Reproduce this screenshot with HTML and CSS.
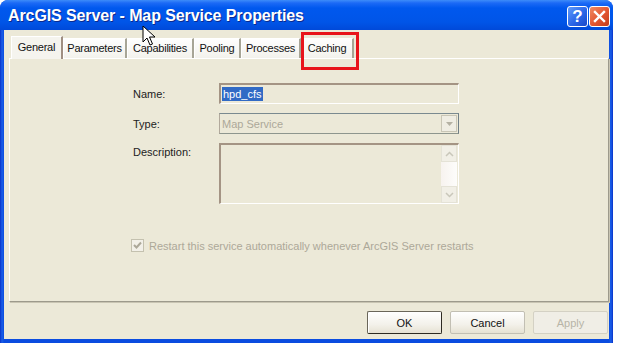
FILE: index.html
```html
<!DOCTYPE html>
<html>
<head>
<meta charset="utf-8">
<link rel="stylesheet" href="styles.css">
</head>
<body>
<div class="window">
  <div class="titlebar">
    <span class="title">ArcGIS Server - Map Service Properties</span>
    <div class="caption-btns">
      <span class="cbtn help">?</span>
      <span class="cbtn close"><svg width="13" height="13" viewBox="0 0 13 13"><path d="M2 2 L11 11 M11 2 L2 11" stroke="#fff" stroke-width="2.4" stroke-linecap="square"/></svg></span>
    </div>
  </div>
  <div class="client">
    <div class="tabs">
      <span class="tab selected t-general">General</span>
      <span class="tab t-params">Parameters</span>
      <span class="tab t-caps">Capabilities</span>
      <span class="tab t-pool">Pooling</span>
      <span class="tab t-proc">Processes</span>
      <span class="tab t-cache">Caching</span>
    </div>
    <div class="panel">
      <div class="form">
        <label class="lbl">Name:</label>
        <div class="field text"><span class="sel">hpd_cfs</span></div>
        <label class="lbl">Type:</label>
        <div class="field select"><span class="grey">Map Service</span><span class="dd"><svg width="7" height="4" viewBox="0 0 7 4"><path d="M0 0 H7 L3.5 4 Z" fill="#B4B1A3"/></svg></span></div>
        <label class="lbl top">Description:</label>
        <div class="field area"><div class="vscroll"><span class="sbtn"><svg width="9" height="6" viewBox="0 0 9 6"><path d="M1 5 L4.5 1.5 L8 5" stroke="#C9C7BA" stroke-width="1.5" fill="none"/></svg></span><span class="strack"></span><span class="sbtn"><svg width="9" height="6" viewBox="0 0 9 6"><path d="M1 1 L4.5 4.5 L8 1" stroke="#C9C7BA" stroke-width="1.5" fill="none"/></svg></span></div></div>
      </div>
      <div class="check-row">
        <span class="checkbox"><svg width="11" height="11" viewBox="0 0 11 11"><path d="M2 5 L4.5 7.5 L9 2.5" stroke="#ACA899" stroke-width="2" fill="none"/></svg></span>
        <span class="check-text">Restart this service automatically whenever ArcGIS Server restarts</span>
      </div>
    </div>
    <div class="buttons">
      <span class="btn default">OK</span>
      <span class="btn">Cancel</span>
      <span class="btn disabled">Apply</span>
    </div>
  </div>
  <div class="highlight"></div>
  <svg class="cursor" width="14" height="22" viewBox="0 0 14 22"><path d="M1 1 L1 17 L5 13 L8 20 L10.5 19 L7.5 12 L13 12 Z" fill="#fff" stroke="#000" stroke-width="1" stroke-linejoin="miter"/></svg>
</div>
</body>
</html>
```

FILE: styles.css
```css
* { box-sizing: border-box; }
html, body { margin: 0; padding: 0; background: #fff; }
body { font-family: "Liberation Sans", Arial, sans-serif; font-size: 11px; color: #000; }

.window {
  position: relative;
  width: 613px;
  height: 343px;
  background: linear-gradient(90deg, #0831C8 0, #1A5EE8 2px, #0A4CE0 4px, #0A4CE0 609px, #1A5EE8 611px, #0831C8 613px);
  border-radius: 8px 8px 0 0;
  overflow: hidden;
}

.titlebar {
  height: 30px;
  display: flex;
  align-items: center;
  justify-content: space-between;
  padding: 0 3px 0 8px;
  background: linear-gradient(#3D8CF9 0, #1C6AF6 3px, #0058EE 8px, #0055E8 22px, #0049D9 30px);
}
.title {
  color: #fff;
  font-weight: bold;
  font-size: 16px;
  letter-spacing: -0.1px;
  text-shadow: 1px 1px 0 #0B2A8E;
  margin-top: 1px;
}
.caption-btns { display: flex; gap: 1px; margin-top: 3px; }
.cbtn {
  width: 21px; height: 21px;
  border: 1px solid #fff;
  border-radius: 3px;
  display: flex; align-items: center; justify-content: center;
  color: #fff;
}
.help {
  background: linear-gradient(135deg, #5F9BFA 0, #2A66E8 55%, #1848C8 100%);
  font-weight: bold; font-size: 17px;
}
.close {
  background: linear-gradient(135deg, #F08A63 0, #E25530 55%, #C43C1A 100%);
}

.client {
  margin: 0 4px;
  height: 309px;
  background: #ECE9D8;
  padding-top: 6px;
}

.tabs {
  display: flex;
  align-items: flex-end;
  height: 22px;
  margin-left: 7px;
  position: relative;
  z-index: 2;
}
.tab {
  height: 20px;
  line-height: 19px;
  text-align: center;
  letter-spacing: -0.25px;
  white-space: nowrap;
  background: linear-gradient(#FEFEFE, #F3F2EC);
  border-left: 1px solid #fff;
  border-top: 1px solid #fff;
  border-right: 2px solid #A7A596;
  color: #111;
}
.tab.selected {
  height: 23px;
  line-height: 20px;
  margin-bottom: -1px;
  background: #F5F4EE;
  border-right: 2px solid #9F8F82;
}
.t-general { width: 52px; }
.t-params { width: 64px; }
.t-caps { width: 67px; }
.t-pool { width: 47px; }
.t-proc { width: 60px; }
.t-cache { width: 53px; }

.panel {
  position: relative;
  z-index: 1;
  margin-left: 5px;
  width: 600px;
  height: 244px;
  border-top: 1px solid #fff;
  border-left: 1px solid #fff;
  border-right: 1px solid #9D9A8C;
  border-bottom: 1px solid #9D9A8C;
  box-shadow: 1px 1px 0 #C9C5B3;
}

.form {
  display: grid;
  grid-template-columns: 86px 240px;
  row-gap: 9px;
  margin: 24px 0 0 123px;
  align-items: center;
}
.lbl { color: #222; }
.lbl.top { align-self: start; padding-top: 3px; }

.field {
  height: 21px;
  border-top: 2px solid #A49484;
  border-left: 2px solid #A49484;
  border-right: 1px solid #fff;
  border-bottom: 1px solid #fff;
  background: #ECE9D8;
  display: flex;
  align-items: center;
  padding-left: 1px;
}
.sel { background: #316AC5; color: #fff; padding: 0 1px; line-height: 14px; }
.field.select {
  border-top: 1px solid #7A8A90;
  border-left: 1px solid #B2A99C;
  border-right: 1px solid #6F7E86;
  border-bottom: 1px solid #8E968E;
  justify-content: space-between;
  padding: 0 1px 0 2px;
}
.grey { color: #ACA899; }
.dd {
  width: 16px; height: 17px;
  border: 1px solid #C9C6B6;
  background: #EFEDE3;
  display: flex; align-items: center; justify-content: center;
}
.field.area {
  height: 61px;
  align-items: stretch;
  justify-content: flex-end;
  padding: 0 1px 0 0;
}
.vscroll { width: 16px; display: flex; flex-direction: column; }
.sbtn {
  height: 17px;
  border: 1px solid #E4E2D6;
  background: #F1EFE6;
  display: flex; align-items: center; justify-content: center;
}
.strack { flex: 1; background: linear-gradient(90deg, #F7F3EF, #FDFDFB); }

.check-row {
  display: flex;
  align-items: center;
  gap: 5px;
  margin: 35px 0 0 121px;
}
.checkbox {
  width: 13px; height: 13px;
  border: 1px solid #C4C1AF;
  background: #F2F0E8;
  display: flex; align-items: center; justify-content: center;
}
.check-text { color: #ACA899; }

.buttons {
  display: flex;
  justify-content: flex-end;
  gap: 8px;
  margin: 9px 1px 0 0;
}
.btn {
  width: 75px; height: 23px;
  display: flex; align-items: center; justify-content: center;
  border: 1px solid #C2BFB3;
  border-radius: 2px;
  background: linear-gradient(#FFFFFF, #F3F1EA 60%, #E6E2D3);
  color: #111;
}
.btn.default {
  border: 1px solid #6A6659;
  border-right-color: #2E2B22;
  border-bottom-color: #2E2B22;
  box-shadow: inset 1px 1px 0 #fff;
}
.btn.disabled { color: #B7B4A6; border-color: #D4D1C4; background: #F0EEE6; }

.highlight {
  position: absolute;
  left: 301px; top: 32px;
  width: 58px; height: 38px;
  border: 3px solid #E8141B;
  z-index: 5;
}
.cursor {
  position: absolute;
  left: 142px; top: 25px;
  z-index: 6;
}
```
